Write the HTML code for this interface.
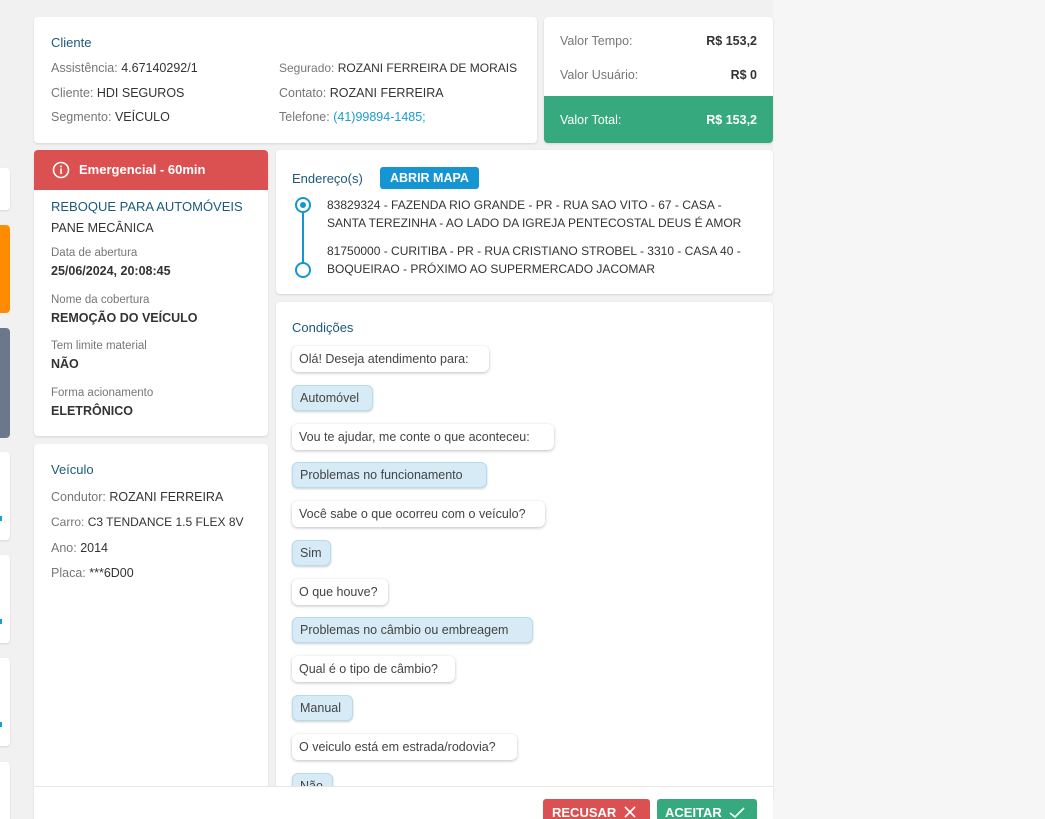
<!DOCTYPE html>
<html><head><meta charset="utf-8">
<style>
*{box-sizing:border-box;margin:0;padding:0}
html,body{width:1045px;height:819px;overflow:hidden}
body{background:#f1f1f1;font-family:"Liberation Sans",sans-serif;font-size:12.5px;color:#444}
#w{position:relative;width:1045px;height:819px;overflow:hidden}
.a{position:absolute}
.card{position:absolute;background:#fff;border-radius:4px;box-shadow:0 1px 2px rgba(0,0,0,.12)}
.t{color:#1b5a7e;font-size:13px}
.g{color:#777}
.d{color:#333}
.b{font-weight:bold}
.bub{position:absolute;left:292px;height:26px;line-height:26px;padding:0 7px;border-radius:6px;background:#fff;box-shadow:0 1px 3px rgba(0,0,0,.25);white-space:nowrap;color:#444;font-size:12.5px}
.bub.s{background:#d6ebf6;box-shadow:0 1px 2px rgba(0,0,0,.2);border:1px solid #b9dbee;line-height:24px}
.lbl{font-size:11.5px;color:#777}
</style></head><body><div id="w">
<div class="a" style="left:773px;top:0;width:272px;height:819px;background:#f6f6f6"></div>

<div class="card" style="left:-4px;top:168px;width:14px;height:42px"></div>
<div class="a" style="left:-4px;top:225px;width:14px;height:88px;background:#ff8c00;border-radius:4px"></div>
<div class="a" style="left:-4px;top:328px;width:14px;height:110px;background:#6b788b;border-radius:4px"></div>
<div class="card" style="left:-4px;top:452px;width:14px;height:88px"><div class="a" style="left:4px;top:64px;width:2px;height:5px;background:#1aa0d0"></div></div>
<div class="card" style="left:-4px;top:555px;width:14px;height:88px"><div class="a" style="left:4px;top:64px;width:2px;height:5px;background:#1aa0d0"></div></div>
<div class="card" style="left:-4px;top:658px;width:14px;height:88px"><div class="a" style="left:4px;top:64px;width:2px;height:5px;background:#1aa0d0"></div></div>
<div class="card" style="left:-4px;top:762px;width:14px;height:70px"></div>

<div class="card" style="left:34px;top:17px;width:503px;height:126px">
<div class="a t" style="left:17px;top:18px">Cliente</div>
<div class="a" style="left:17px;top:44px"><span class="g">Assistência:</span> <span class="d">4.67140292/1</span></div>
<div class="a" style="left:17px;top:69px"><span class="g">Cliente:</span> <span class="d">HDI SEGUROS</span></div>
<div class="a" style="left:17px;top:93px"><span class="g">Segmento:</span> <span class="d">VEÍCULO</span></div>
<div class="a" style="left:245px;top:44px;white-space:nowrap;font-size:12px"><span class="g">Segurado:</span> <span class="d">ROZANI FERREIRA DE MORAIS</span></div>
<div class="a" style="left:245px;top:69px"><span class="g">Contato:</span> <span class="d">ROZANI FERREIRA</span></div>
<div class="a" style="left:245px;top:93px"><span class="g">Telefone:</span> <span style="color:#1a9ad6">(41)99894-1485;</span></div>
</div>

<div class="card" style="left:544px;top:17px;width:229px;height:126px;overflow:hidden">
<div class="a g" style="left:16px;top:17px">Valor Tempo:</div>
<div class="a b d" style="right:16px;top:17px">R$ 153,2</div>
<div class="a g" style="left:16px;top:51px">Valor Usuário:</div>
<div class="a b d" style="right:16px;top:51px">R$ 0</div>
<div class="a" style="left:0;top:79px;width:229px;height:47px;background:#36a97f;color:#fff">
<div class="a" style="left:16px;top:17px">Valor Total:</div>
<div class="a b" style="right:16px;top:17px">R$ 153,2</div></div>
</div>

<div class="card" style="left:34px;top:150px;width:234px;height:286px;overflow:hidden">
<div class="a" style="left:0;top:0;width:234px;height:40px;background:#db5050;color:#fff">
<svg class="a" style="left:18px;top:11px" width="18" height="18" viewBox="0 0 18 18"><circle cx="9" cy="9" r="7.5" fill="none" stroke="#fff" stroke-width="1.6"/><rect x="8.2" y="7.5" width="1.6" height="5.5" fill="#fff"/><rect x="8.2" y="4.5" width="1.6" height="1.8" fill="#fff"/></svg>
<div class="a b" style="left:45px;top:12px;font-size:13px">Emergencial - 60min</div></div>
<div class="a" style="left:17px;top:49px;color:#1b5a7e;font-size:13px">REBOQUE PARA AUTOMÓVEIS</div>
<div class="a d" style="left:17px;top:71px">PANE MECÂNICA</div>
<div class="a lbl" style="left:17px;top:97px">Data de abertura</div>
<div class="a d b" style="left:17px;top:114px">25/06/2024, 20:08:45</div>
<div class="a lbl" style="left:17px;top:144px">Nome da cobertura</div>
<div class="a d b" style="left:17px;top:161px">REMOÇÃO DO VEÍCULO</div>
<div class="a lbl" style="left:17px;top:190px">Tem limite material</div>
<div class="a d b" style="left:17px;top:207px">NÃO</div>
<div class="a lbl" style="left:17px;top:237px">Forma acionamento</div>
<div class="a d b" style="left:17px;top:254px">ELETRÔNICO</div>
</div>

<div class="card" style="left:34px;top:444px;width:234px;height:380px">
<div class="a t" style="left:17px;top:18px">Veículo</div>
<div class="a" style="left:17px;top:46px"><span class="g">Condutor:</span> <span class="d">ROZANI FERREIRA</span></div>
<div class="a" style="left:17px;top:71px;white-space:nowrap;font-size:12px"><span class="g">Carro:</span> <span class="d">C3 TENDANCE 1.5 FLEX 8V</span></div>
<div class="a" style="left:17px;top:97px"><span class="g">Ano:</span> <span class="d">2014</span></div>
<div class="a" style="left:17px;top:122px"><span class="g">Placa:</span> <span class="d">***6D00</span></div>
</div>

<div class="card" style="left:276px;top:150px;width:497px;height:144px">
<div class="a t" style="left:16px;top:21px">Endereço(s)</div>
<div class="a b" style="left:104px;top:17px;height:22px;line-height:22px;padding:0 10px;background:#1596d2;color:#fff;border-radius:3px;font-size:12.5px">ABRIR MAPA</div>
<div class="a" style="left:26px;top:62px;width:2px;height:52px;background:#1596d2"></div>
<div class="a" style="left:19px;top:47px;width:16px;height:16px;border:2px solid #1596d2;border-radius:50%;background:#fff"><div class="a" style="left:3px;top:3px;width:6px;height:6px;border-radius:50%;background:#1596d2"></div></div>
<div class="a" style="left:19px;top:112px;width:16px;height:16px;border:2px solid #1596d2;border-radius:50%;background:#fff"></div>
<div class="a d" style="left:51px;top:46px;line-height:18px;width:440px;font-size:12px;white-space:nowrap">83829324 - FAZENDA RIO GRANDE - PR - RUA SAO VITO - 67 - CASA -<br>SANTA TEREZINHA - AO LADO DA IGREJA PENTECOSTAL DEUS É AMOR</div>
<div class="a d" style="left:51px;top:92px;line-height:18px;width:440px;font-size:12px;white-space:nowrap">81750000 - CURITIBA - PR - RUA CRISTIANO STROBEL - 3310 - CASA 40 -<br>BOQUEIRAO - PRÓXIMO AO SUPERMERCADO JACOMAR</div>
</div>

<div class="card" style="left:276px;top:302px;width:497px;height:500px"></div>
<div class="a t" style="left:292px;top:320px">Condições</div>
<div class="bub" style="top:346px;width:197px">Olá! Deseja atendimento para:</div>
<div class="bub s" style="top:385px;width:81px">Automóvel</div>
<div class="bub" style="top:424px;width:262px">Vou te ajudar, me conte o que aconteceu:</div>
<div class="bub s" style="top:462px;width:195px">Problemas no funcionamento</div>
<div class="bub" style="top:501px;width:253px">Você sabe o que ocorreu com o veículo?</div>
<div class="bub s" style="top:540px;width:39px">Sim</div>
<div class="bub" style="top:579px;width:96px">O que houve?</div>
<div class="bub s" style="top:617px;width:241px">Problemas no câmbio ou embreagem</div>
<div class="bub" style="top:656px;width:163px">Qual é o tipo de câmbio?</div>
<div class="bub s" style="top:695px;width:61px">Manual</div>
<div class="bub" style="top:734px;width:225px">O veiculo está em estrada/rodovia?</div>
<div class="bub s" style="top:773px;width:41px">Não</div>

<div class="a" style="left:34px;top:786px;width:739px;height:33px;background:#fff;border-top:1px solid #e6e6e6"></div>
<div class="a b" style="left:543px;top:799px;width:107px;height:26px;background:#db5050;color:#fff;border-radius:3px;padding:6px 0 0 9px;font-size:13px">RECUSAR
<svg class="a" style="left:80px;top:6px" width="14" height="14" viewBox="0 0 14 14"><path d="M2 2L12 12M12 2L2 12" stroke="#fff" stroke-width="1.6"/></svg></div>
<div class="a b" style="left:657px;top:799px;width:100px;height:26px;background:#36a97f;color:#fff;border-radius:3px;padding:6px 0 0 8px;font-size:13px">ACEITAR
<svg class="a" style="left:72px;top:6px" width="16" height="14" viewBox="0 0 16 14"><path d="M1 8L6 12L15 3" fill="none" stroke="#fff" stroke-width="1.6"/></svg></div>
</div></body></html>
